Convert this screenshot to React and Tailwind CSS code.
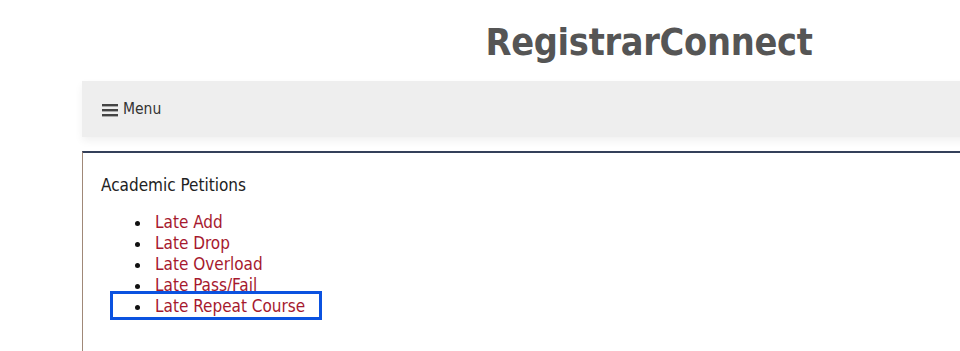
export default function App() {
  const links = ["Late Add", "Late Drop", "Late Overload", "Late Pass/Fail", "Late Repeat Course"];
  return (
    <div className="w-[960px] h-[351px] overflow-hidden bg-white" style={{ fontFamily: '"DejaVu Sans Condensed", "DejaVu Sans", sans-serif' }}>
      <div className="ml-[82px] w-[1134px]">
        <div className="h-[81px] flex items-center justify-center">
          <h1 className="text-[37.5px] font-bold text-[#555555] leading-none pt-[4px] tracking-[-0.3px]">RegistrarConnect</h1>
        </div>
        <div className="h-[56px] bg-[#eeeeee] flex items-center pl-[20px] text-[#333333] text-[15.5px] shadow-[0_4px_8px_rgba(0,0,0,0.06)]">
          <svg width="16" height="14" viewBox="0 0 16 14" className="mr-[5px] mt-[1px]">
            <rect x="0" y="1" width="16" height="2.4" fill="#444" />
            <rect x="0" y="6" width="16" height="2.4" fill="#444" />
            <rect x="0" y="11" width="16" height="2.4" fill="#444" />
          </svg>
          <span className="mt-[1px]">Menu</span>
        </div>
        <div className="mt-[14px] border-t-2 border-t-[#34405a] border-l border-l-[#a08878] h-[220px] pl-[18px] pt-[22px]">
          <div className="text-[17px] text-[#222222] leading-[20px]">Academic Petitions</div>
          <ul className="list-disc mt-[17px] pl-[51px] text-[17px] leading-[21px] text-[#111]">
            {links.map((l, i) => (
              <li key={l} className="relative pl-[3px]">
                <a href="#" className="text-[#a6192e]">{l}</a>
                {i === links.length - 1 && (
                  <div className="absolute left-[-42px] top-[-5px] w-[212px] h-[29px] border-[3px] border-[#0b52e0]" />
                )}
              </li>
            ))}
          </ul>
        </div>
      </div>
    </div>
  );
}
